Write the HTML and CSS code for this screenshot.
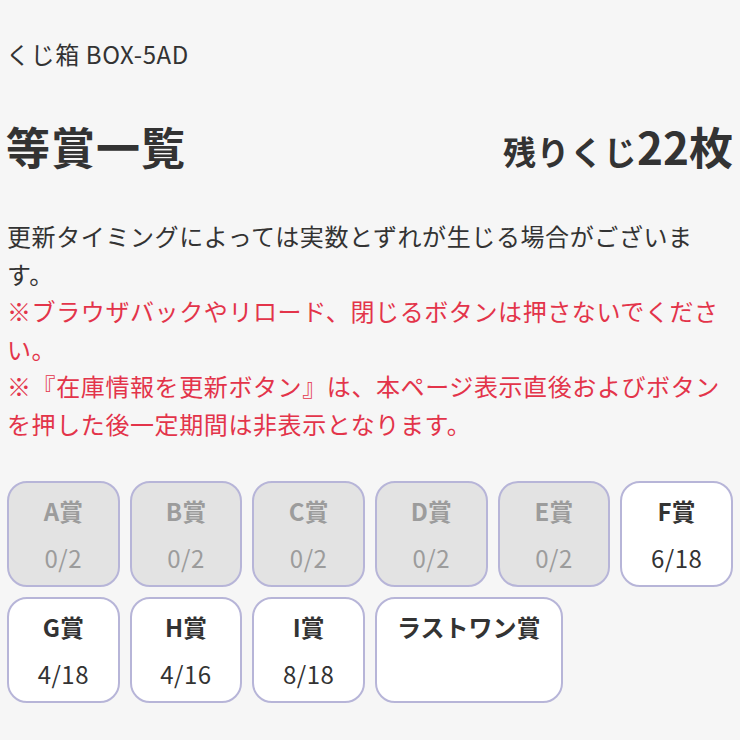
FILE: index.html
```html
<!DOCTYPE html>
<html lang="ja">
<head>
<meta charset="utf-8">
<title>等賞一覧</title>
<link rel="stylesheet" href="styles.css">
</head>
<body>
<main class="page">
  <div class="crumb">くじ箱 BOX-5AD</div>
  <div class="title-row">
    <h1 class="title">等賞一覧</h1>
    <div class="remain"><span class="remain-label">残りくじ</span><span class="remain-num">22枚</span></div>
  </div>
  <p class="notice">更新タイミングによっては実数とずれが生じる場合がございます。<br><span class="warn">※ブラウザバックやリロード、閉じるボタンは押さないでください。</span><br><span class="warn">※『在庫情報を更新ボタン』は、本ページ表示直後およびボタンを押した後一定期間は非表示となります。</span></p>
  <div class="cards">
    <div class="card off"><div class="name">A賞</div><div class="count">0/2</div></div>
    <div class="card off"><div class="name">B賞</div><div class="count">0/2</div></div>
    <div class="card off"><div class="name">C賞</div><div class="count">0/2</div></div>
    <div class="card off"><div class="name">D賞</div><div class="count">0/2</div></div>
    <div class="card off"><div class="name">E賞</div><div class="count">0/2</div></div>
    <div class="card"><div class="name">F賞</div><div class="count">6/18</div></div>
    <div class="card"><div class="name">G賞</div><div class="count">4/18</div></div>
    <div class="card"><div class="name">H賞</div><div class="count">4/16</div></div>
    <div class="card"><div class="name">I賞</div><div class="count">8/18</div></div>
    <div class="card wide"><div class="name">ラストワン賞</div></div>
  </div>
</main>
</body>
</html>
```
FILE: styles.css
```css
html, body {
  margin: 0;
  padding: 0;
  background: #f6f6f6;
}
body {
  font-family: "Noto Sans CJK JP", "Noto Sans", sans-serif;
  color: #333333;
}
.page {
  padding: 36px 7px 0 6px;
}
.crumb {
  font-size: 24px;
  line-height: 36px;
  letter-spacing: 0.6px;
}
.title-row {
  display: flex;
  justify-content: space-between;
  align-items: baseline;
  margin-top: 44px;
  height: 60px;
}
.title {
  margin: 0;
  font-size: 44px;
  line-height: 60px;
  font-weight: 700;
  letter-spacing: 1px;
}
.remain {
  font-weight: 700;
  line-height: 60px;
}
.remain-label {
  font-size: 33px;
  letter-spacing: 0.5px;
}
.remain-num {
  font-size: 44px;
}
.notice {
  margin: 41px 0 0 0;
  font-size: 24px;
  line-height: 37.5px;
  letter-spacing: 0.6px;
  padding-left: 1px;
}
.warn {
  color: #e3344a;
}
.cards {
  display: flex;
  flex-wrap: wrap;
  gap: 10px;
  margin-top: 39px;
  padding-left: 1px;
}
.card {
  box-sizing: border-box;
  flex: 0 0 calc((100% - 50px) / 6);
  height: 106px;
  border: 2px solid #b7b5d8;
  border-radius: 20px;
  background: #ffffff;
  display: flex;
  flex-direction: column;
  align-items: center;
  padding-top: 10px;
}
.card.off {
  background: #e3e3e3;
  color: #9c9c9c;
}
.card.wide {
  flex: 0 0 auto;
  padding-left: 20px;
  padding-right: 20px;
}
.name {
  font-size: 24px;
  font-weight: 700;
  line-height: 36px;
}
.count {
  font-size: 24px;
  line-height: 36px;
  margin-top: 11px;
  letter-spacing: 0.5px;
}
```
